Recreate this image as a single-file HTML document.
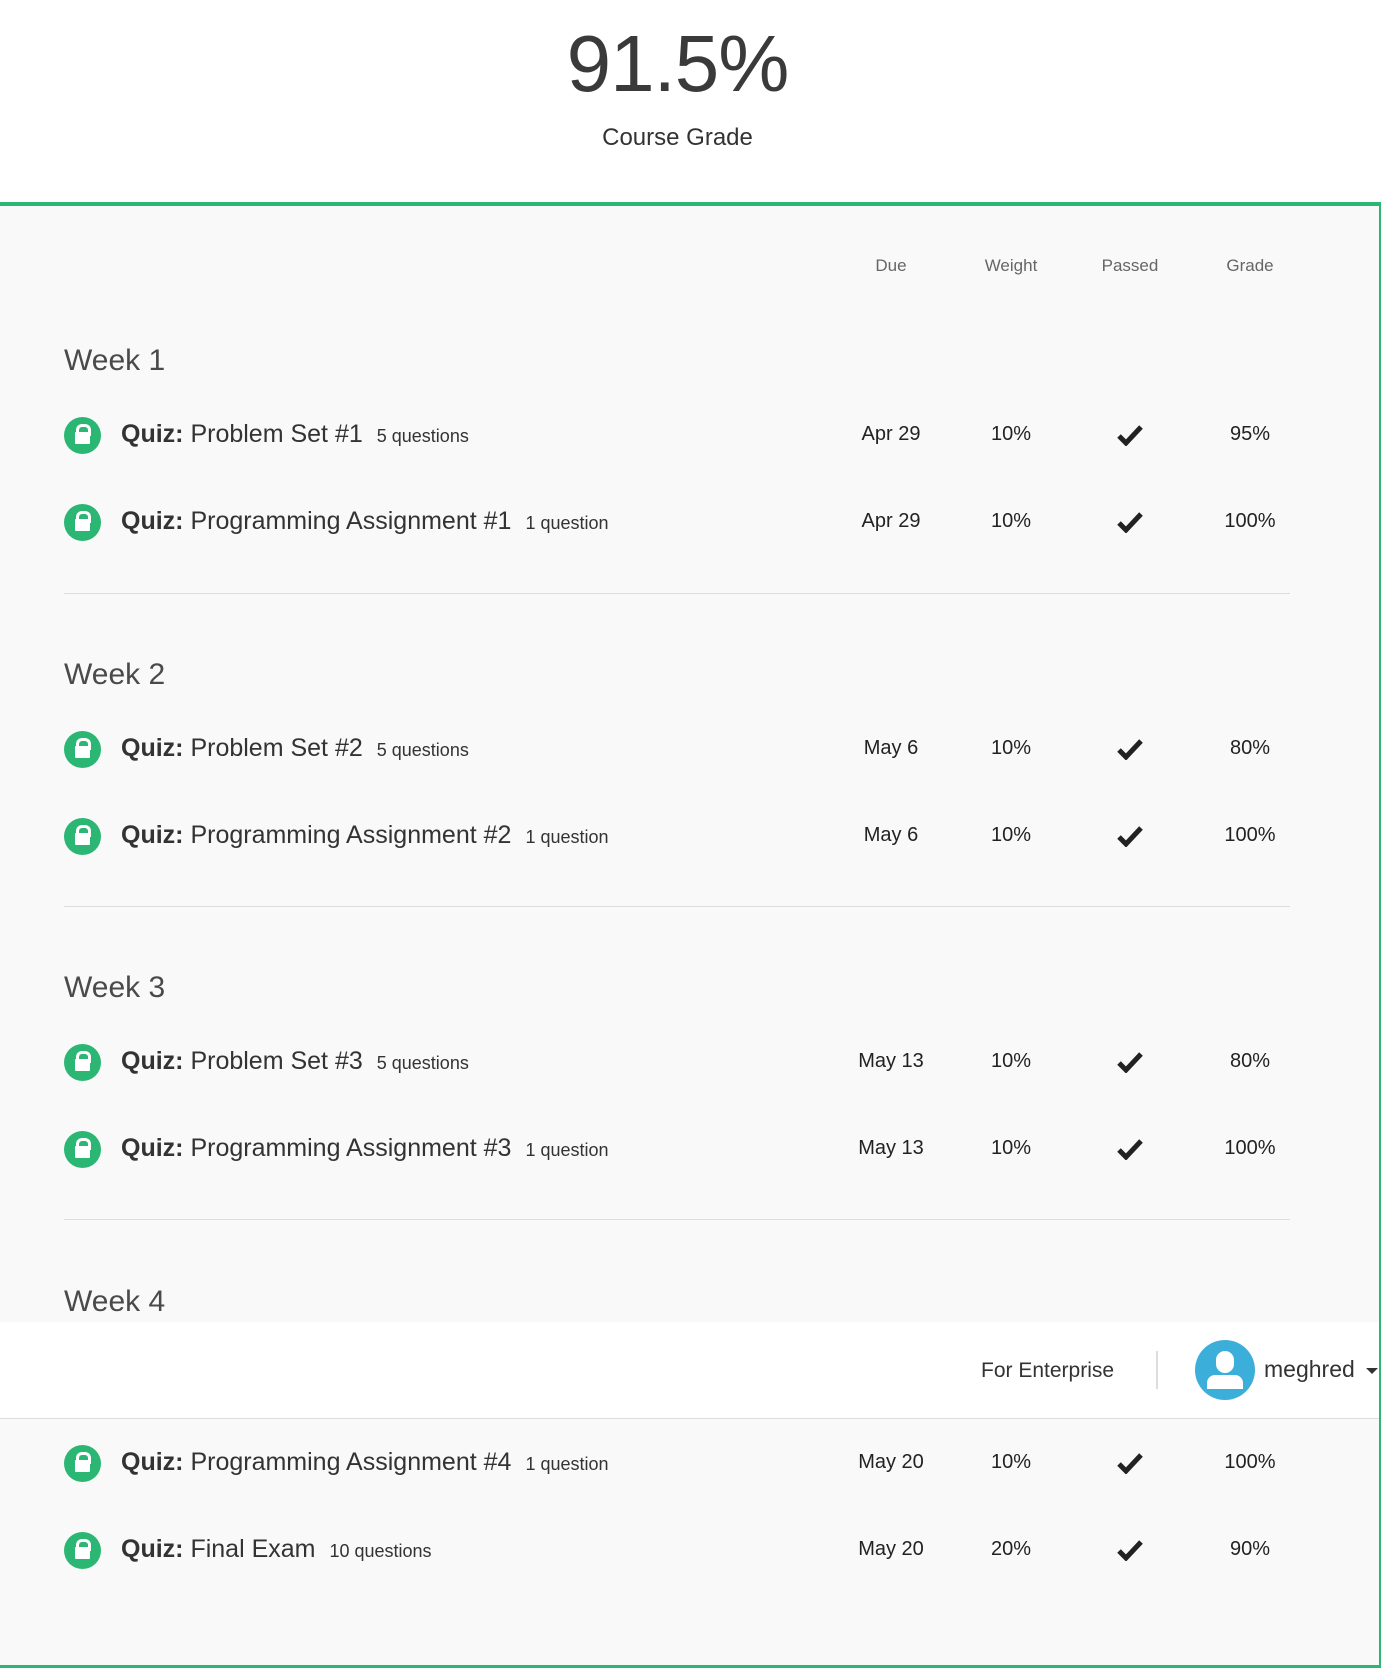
<!DOCTYPE html>
<html><head><meta charset="utf-8"><style>
*{margin:0;padding:0;box-sizing:border-box}
body{width:1381px;height:1668px;background:#fff;font-family:"Liberation Sans",sans-serif;color:#333;position:relative;overflow:hidden}
.abs{position:absolute}
.grade{left:0;width:1355px;text-align:center;top:18px;font-size:80px;font-weight:300;color:#3a3a3a;letter-spacing:-1px}
.cg{left:0;width:1355px;text-align:center;top:124px;font-size:24px;color:#333}
.panel{left:0;top:202px;width:1381px;height:1466px;background:#f9f9f9;border-top:4px solid #2bb673;border-right:2px solid #2bb673;border-bottom:3px solid #2bb673}
.hd{top:256px;font-size:17px;color:#666;width:120px;text-align:center;margin-left:-60px}
.wk{left:64px;font-size:30px;color:#4a4a4a;font-weight:300}
.row{left:0;width:1381px;height:40px}
.ic{position:absolute;left:64px;top:2px;width:37px;height:37px;border-radius:50%;background:#2bb673}
.ic:before{content:"";position:absolute;left:12px;top:7px;width:9px;height:9px;border:3px solid #fff;border-bottom:none;border-radius:6px 6px 0 0}
.ic:after{content:"";position:absolute;left:11px;top:15px;width:15px;height:12px;background:#fff;border-radius:1px}
.t{position:absolute;left:121px;top:5px;font-size:25px;color:#333;white-space:nowrap}
.t b{font-weight:bold}
.t small{font-size:18px;margin-left:14px}
.c{position:absolute;top:8px;width:120px;margin-left:-60px;text-align:center;font-size:20px;color:#222}
.ck{position:absolute;left:1117px;top:9px}
.div{left:64px;width:1226px;height:1px;background:#ddd}
.nav{left:0;top:1322px;width:1379px;height:97px;background:#fff;border-bottom:1px solid #ddd}
</style></head><body>
<div class="abs grade">91.5%</div>
<div class="abs cg">Course Grade</div>
<div class="abs panel"></div>
<div class="abs hd" style="left:891px">Due</div>
<div class="abs hd" style="left:1011px">Weight</div>
<div class="abs hd" style="left:1130px">Passed</div>
<div class="abs hd" style="left:1250px">Grade</div>

<div class="abs wk" style="top:344px">Week 1</div>
<div class="abs row" style="top:415px"><div class="ic"></div><div class="t"><b>Quiz:</b> Problem Set #1<small>5 questions</small></div><div class="c" style="left:891px">Apr 29</div><div class="c" style="left:1011px">10%</div><svg class="ck" width="26" height="22" viewBox="0 0 26 22"><path d="M2 12 L9 19 L24 3" fill="none" stroke="#222" stroke-width="5"/></svg><div class="c" style="left:1250px">95%</div></div>
<div class="abs row" style="top:502px"><div class="ic"></div><div class="t"><b>Quiz:</b> Programming Assignment #1<small>1 question</small></div><div class="c" style="left:891px">Apr 29</div><div class="c" style="left:1011px">10%</div><svg class="ck" width="26" height="22" viewBox="0 0 26 22"><path d="M2 12 L9 19 L24 3" fill="none" stroke="#222" stroke-width="5"/></svg><div class="c" style="left:1250px">100%</div></div>
<div class="abs div" style="top:593px"></div>

<div class="abs wk" style="top:658px">Week 2</div>
<div class="abs row" style="top:729px"><div class="ic"></div><div class="t"><b>Quiz:</b> Problem Set #2<small>5 questions</small></div><div class="c" style="left:891px">May 6</div><div class="c" style="left:1011px">10%</div><svg class="ck" width="26" height="22" viewBox="0 0 26 22"><path d="M2 12 L9 19 L24 3" fill="none" stroke="#222" stroke-width="5"/></svg><div class="c" style="left:1250px">80%</div></div>
<div class="abs row" style="top:816px"><div class="ic"></div><div class="t"><b>Quiz:</b> Programming Assignment #2<small>1 question</small></div><div class="c" style="left:891px">May 6</div><div class="c" style="left:1011px">10%</div><svg class="ck" width="26" height="22" viewBox="0 0 26 22"><path d="M2 12 L9 19 L24 3" fill="none" stroke="#222" stroke-width="5"/></svg><div class="c" style="left:1250px">100%</div></div>
<div class="abs div" style="top:906px"></div>

<div class="abs wk" style="top:971px">Week 3</div>
<div class="abs row" style="top:1042px"><div class="ic"></div><div class="t"><b>Quiz:</b> Problem Set #3<small>5 questions</small></div><div class="c" style="left:891px">May 13</div><div class="c" style="left:1011px">10%</div><svg class="ck" width="26" height="22" viewBox="0 0 26 22"><path d="M2 12 L9 19 L24 3" fill="none" stroke="#222" stroke-width="5"/></svg><div class="c" style="left:1250px">80%</div></div>
<div class="abs row" style="top:1129px"><div class="ic"></div><div class="t"><b>Quiz:</b> Programming Assignment #3<small>1 question</small></div><div class="c" style="left:891px">May 13</div><div class="c" style="left:1011px">10%</div><svg class="ck" width="26" height="22" viewBox="0 0 26 22"><path d="M2 12 L9 19 L24 3" fill="none" stroke="#222" stroke-width="5"/></svg><div class="c" style="left:1250px">100%</div></div>
<div class="abs div" style="top:1219px"></div>

<div class="abs wk" style="top:1285px">Week 4</div>
<div class="abs nav">
  <div class="abs" style="left:981px;top:37px;font-size:21px;color:#333">For Enterprise</div>
  <div class="abs" style="left:1156px;top:29px;width:2px;height:38px;background:#ddd"></div>
  <div class="abs" style="left:1195px;top:18px;width:60px;height:60px;border-radius:50%;background:#3bafda;overflow:hidden">
    <div class="abs" style="left:21px;top:11px;width:18px;height:22px;border-radius:9px;background:#fff"></div>
    <div class="abs" style="left:12px;top:35px;width:36px;height:14px;border-radius:8px 8px 0 0;background:#fff"></div>
  </div>
  <div class="abs" style="left:1264px;top:34px;font-size:23px;color:#333">meghred</div>
  <div class="abs" style="left:1366px;top:46px;width:0;height:0;border-left:6px solid transparent;border-right:6px solid transparent;border-top:6px solid #333"></div>
</div>
<div class="abs row" style="top:1443px"><div class="ic"></div><div class="t"><b>Quiz:</b> Programming Assignment #4<small>1 question</small></div><div class="c" style="left:891px">May 20</div><div class="c" style="left:1011px">10%</div><svg class="ck" width="26" height="22" viewBox="0 0 26 22"><path d="M2 12 L9 19 L24 3" fill="none" stroke="#222" stroke-width="5"/></svg><div class="c" style="left:1250px">100%</div></div>
<div class="abs row" style="top:1530px"><div class="ic"></div><div class="t"><b>Quiz:</b> Final Exam<small>10 questions</small></div><div class="c" style="left:891px">May 20</div><div class="c" style="left:1011px">20%</div><svg class="ck" width="26" height="22" viewBox="0 0 26 22"><path d="M2 12 L9 19 L24 3" fill="none" stroke="#222" stroke-width="5"/></svg><div class="c" style="left:1250px">90%</div></div>
</body></html>
